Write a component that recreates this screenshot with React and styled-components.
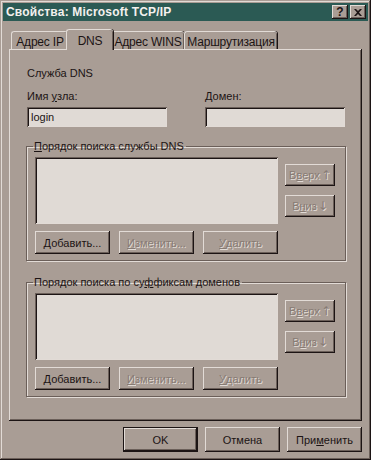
import React from 'react';
import styled, { createGlobalStyle, css } from 'styled-components';

const bg = '#a99d95';
const light = '#e2dbd6';
const dark = '#6b5f59';
const black = '#1c1414';
const field = '#e0dad5';

const GlobalStyle = createGlobalStyle`
    html, body {
        margin: 0;
        padding: 0;
        background: ${bg};
    }
    body {
        font-family: "Liberation Sans", Arial, sans-serif;
        font-size: 11px;
        color: ${black};
    }
`

const raised = css`
    box-shadow: inset -1px -1px ${black}, inset 1px 1px ${light}, inset -2px -2px ${dark};
`

const Window = styled.div`
    width: 371px;
    height: 460px;
    box-sizing: border-box;
    padding: 3px;
    background: ${bg};
    box-shadow: inset -1px -1px ${black}, inset 1px 1px ${bg}, inset -2px -2px ${dark}, inset 2px 2px ${light};
    display: flex;
    flex-direction: column;
`

const TitleBar = styled.div`
    height: 18px;
    background: #2b5a54;
    color: #f4f0ee;
    font-weight: bold;
    font-size: 12px;
    display: flex;
    align-items: center;
    padding: 0 2px 0 3px;
`

const Title = styled.div`
    flex: 1;
    letter-spacing: 0.2px;
`

const CaptionButton = styled.div`
    width: 16px;
    height: 14px;
    box-sizing: border-box;
    background: ${bg};
    ${raised};
    color: ${black};
    font-size: 12px;
    font-weight: bold;
    display: flex;
    align-items: center;
    justify-content: center;
    margin-left: ${p => p.gap || 0}px;
    svg { display: block; }
`

const TabRow = styled.div`
    display: flex;
    align-items: flex-end;
    margin: 8px 0 0 8px;
    height: 20px;
    position: relative;
    z-index: 1;
`

const Tab = styled.div`
    box-sizing: border-box;
    width: ${p => p.w}px;
    height: ${p => p.active ? 21 : 18}px;
    padding-top: ${p => p.active ? 4 : 3}px;
    text-align: center;
    margin: ${p => p.active ? '0 -2px -1px -2px' : '0'};
    background: ${bg};
    border-radius: 3px 3px 0 0;
    border-top: 1px solid ${light};
    border-left: 1px solid ${light};
    box-shadow: inset -1px 0 ${dark}, 1px 0 ${black};
    font-size: 12px;
    letter-spacing: -0.2px;
    white-space: nowrap;
    position: relative;
    z-index: ${p => p.active ? 2 : 0};
`

const Panel = styled.div`
    margin: 0 6px 0 6px;
    height: 372px;
    box-sizing: border-box;
    padding: 17px 16px 0 18px;
    box-shadow: inset -1px -1px ${black}, inset 1px 1px ${light}, inset -2px -2px ${dark};
`

const Label = styled.div`
    font-size: 11px;
    height: 14px;
    line-height: 14px;
    u { text-underline-offset: 1px; }
`

const FieldRow = styled.div`
    display: grid;
    grid-template-columns: 140px 140px;
    column-gap: 38px;
    margin-top: 9px;
`

const FieldCol = styled.div`
    display: flex;
    flex-direction: column;
    gap: 4px;
`

const sunken = css`
    box-sizing: border-box;
    background: ${field};
    box-shadow: inset 1px 1px ${dark}, inset -1px -1px ${light}, inset 2px 2px ${black};
`

const Input = styled.div`
    ${sunken};
    height: 20px;
    padding: 3px 4px;
    font-size: 11px;
    line-height: 15px;
`

const Group = styled.fieldset`
    margin: ${p => p.top}px 0 0 -1px;
    width: 318px;
    box-sizing: border-box;
    border: 1px solid ${dark};
    box-shadow: 1px 1px ${light}, inset 1px 1px ${light};
    padding: 5px 8px 6px 8px;
    legend {
        padding: 0 2px 0 1px;
        margin-left: -2px;
        font-size: 11px;
    }
`

const GroupBody = styled.div`
    display: grid;
    grid-template-columns: 243px 52px;
    column-gap: 7px;
    row-gap: 7px;
`

const List = styled.div`
    ${sunken};
    height: 67px;
`

const SideButtons = styled.div`
    display: flex;
    flex-direction: column;
    gap: 9px;
    padding-top: 7px;
`

const ButtonRow = styled.div`
    display: flex;
    gap: 9px;
    grid-column: 1 / 3;
`

const Button = styled.div`
    box-sizing: border-box;
    width: ${p => p.w || 75}px;
    height: ${p => p.h || 23}px;
    background: ${bg};
    ${raised};
    display: flex;
    align-items: center;
    justify-content: center;
    font-size: 11px;
    white-space: nowrap;
    color: ${p => p.disabled ? '#877b74' : black};
    text-shadow: ${p => p.disabled ? `1px 1px ${light}` : 'none'};
    ${p => p.isDefault && css`
        box-shadow: inset 0 0 0 1px ${black}, inset -2px -2px ${black}, inset 2px 2px ${light}, inset -3px -3px ${dark};
    `}
    u { text-decoration: underline; text-underline-offset: 1px; }
`

const Arrow = styled.span`
    font-family: "DejaVu Sans", sans-serif;
    font-size: 12px;
    margin-left: 1px;
`

const Footer = styled.div`
    display: flex;
    justify-content: flex-end;
    gap: 7px;
    margin: 6px 6px 0 0;
`

const SearchGroup = ({ title, top }) => (
    <Group top={top}>
        <legend>{title}</legend>
        <GroupBody>
            <List />
            <SideButtons>
                <Button w={50} h={22} disabled>В<u>в</u>ерх<Arrow>↑</Arrow></Button>
                <Button w={50} h={22} disabled>В<u>н</u>из<Arrow>↓</Arrow></Button>
            </SideButtons>
            <ButtonRow>
                <Button>Добавить...</Button>
                <Button disabled><u>И</u>зменить...</Button>
                <Button disabled><u>У</u>далить</Button>
            </ButtonRow>
        </GroupBody>
    </Group>
)

const App = () => {
    return (
        <Window>
            <GlobalStyle />
            <TitleBar>
                <Title>Свойства: Microsoft TCP/IP</Title>
                <CaptionButton>?</CaptionButton>
                <CaptionButton gap={2}>
                    <svg width="8" height="7" viewBox="0 0 8 7">
                        <path d="M0 0h2l2 2 2-2h2L5 3.5 8 7H6L4 5 2 7H0l3-3.5z" fill={black} />
                    </svg>
                </CaptionButton>
            </TitleBar>
            <TabRow>
                <Tab w={57}>Адрес IP</Tab>
                <Tab active w={47}>DNS</Tab>
                <Tab w={73}>Адрес WINS</Tab>
                <Tab w={93}>Маршрутизация</Tab>
            </TabRow>
            <Panel>
                <Label>Служба DNS</Label>
                <FieldRow>
                    <FieldCol>
                        <Label>Имя <u>у</u>зла:</Label>
                        <Input>login</Input>
                    </FieldCol>
                    <FieldCol>
                        <Label><u>Д</u>омен:</Label>
                        <Input />
                    </FieldCol>
                </FieldRow>
                <SearchGroup top={13} title={<><u>П</u>орядок поиска службы DNS</>} />
                <SearchGroup top={15} title={<>Порядок поиска по су<u>ф</u>фиксам доменов</>} />
            </Panel>
            <Footer>
                <Button isDefault h={25}>OK</Button>
                <Button h={25}>Отмена</Button>
                <Button h={25}>При<u>м</u>енить</Button>
            </Footer>
        </Window>
    )
}

export default App;
